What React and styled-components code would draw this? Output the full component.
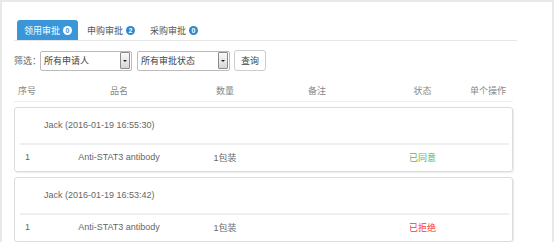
import React from 'react'
import styled, { createGlobalStyle } from 'styled-components'

const GlobalStyle = createGlobalStyle`
  html, body {
    margin: 0;
    padding: 0;
    background: #fff;
  }
  body {
    font-family: 'Liberation Sans', 'Noto Sans CJK SC', sans-serif;
    font-size: 9px;
    color: #666;
  }
`

const COLS = '26px 158px 54px 130px 81px 50px'
const CARD_COLS = '25px 158px 54px 130px 81px 50px'

const tabs = [
  { label: '领用审批', count: 0, active: true },
  { label: '申购审批', count: 2 },
  { label: '采购审批', count: 0 },
]

const records = [
  {
    who: 'Jack (2016-01-19 16:55:30)',
    no: 1,
    name: 'Anti-STAT3 antibody',
    qty: '1包装',
    note: '',
    status: '已同意',
    ok: true,
  },
  {
    who: 'Jack (2016-01-19 16:53:42)',
    no: 1,
    name: 'Anti-STAT3 antibody',
    qty: '1包装',
    note: '',
    status: '已拒绝',
    ok: false,
  },
]

const App = () => {
  return (
    <>
      <GlobalStyle />
      <Frame>
        <TabBar>
          {tabs.map((t) => (
            <Tab key={t.label} active={t.active}>
              {t.label}
              <Badge active={t.active}>{t.count}</Badge>
            </Tab>
          ))}
        </TabBar>

        <FilterRow>
          <FilterLabel>筛选：</FilterLabel>
          <Select width='92px'>
            <span>所有申请人</span>
            <Arrow />
          </Select>
          <Select width='93px'>
            <span>所有审批状态</span>
            <Arrow />
          </Select>
          <Button>查询</Button>
        </FilterRow>

        <HeadRow>
          <span>序号</span>
          <span>品名</span>
          <span>数量</span>
          <span>备注</span>
          <span>状态</span>
          <span>单个操作</span>
        </HeadRow>

        {records.map((r) => (
          <Card key={r.who}>
            <CardHeader>{r.who}</CardHeader>
            <Divider />
            <ItemRow>
              <span>{r.no}</span>
              <span>{r.name}</span>
              <span>{r.qty}</span>
              <span>{r.note}</span>
              <Status ok={r.ok}>{r.status}</Status>
              <span />
            </ItemRow>
          </Card>
        ))}
      </Frame>
    </>
  )
}

export default App

const Frame = styled.div`
  box-sizing: border-box;
  width: 554px;
  height: 242px;
  overflow: hidden;
  border: 2px solid #e8e8e8;
  border-bottom: none;
  padding: 18px 0 0 12px;
`

const TabBar = styled.div`
  display: flex;
  width: 500px;
  height: 20px;
  padding-left: 3px;
  box-sizing: content-box;
  border-bottom: 1px solid #e6e6e6;
`

const Tab = styled.div`
  display: flex;
  align-items: center;
  gap: 3px;
  height: 20px;
  padding: 0 6px 0 7px;
  margin-right: 2px;
  border-radius: 3px 3px 0 0;
  background: ${(props) => (props.active ? '#3a96d9' : 'transparent')};
  color: ${(props) => (props.active ? '#fff' : '#555')};
  font-size: 9px;
`

const Badge = styled.span`
  display: inline-flex;
  align-items: center;
  justify-content: center;
  width: 9px;
  height: 9px;
  border-radius: 50%;
  font-size: 7px;
  font-weight: bold;
  line-height: 1;
  background: ${(props) => (props.active ? '#fff' : '#2f88cc')};
  color: ${(props) => (props.active ? '#3a96d9' : '#fff')};
`

const FilterRow = styled.div`
  display: flex;
  align-items: center;
  margin-top: 9px;
  height: 21px;
`

const FilterLabel = styled.span`
  color: #666;
  margin-right: -1px;
`

const Select = styled.div`
  box-sizing: border-box;
  display: flex;
  align-items: center;
  justify-content: space-between;
  width: ${(props) => props.width};
  height: 20px;
  margin-right: 5px;
  padding: 0 1px 0 3px;
  border: 1px solid #bbb;
  border-radius: 2px;
  background: #fff;
  color: #444;
`

const Arrow = styled.span`
  box-sizing: border-box;
  display: flex;
  align-items: center;
  justify-content: center;
  width: 10px;
  height: 17px;
  border: 1px solid #8a8a8a;
  border-radius: 1px;
  background: linear-gradient(#fafafa, #d6d6d6);
  &::after {
    content: '';
    border-left: 2px solid transparent;
    border-right: 2px solid transparent;
    border-top: 2px solid #222;
  }
`

const Button = styled.div`
  box-sizing: border-box;
  display: flex;
  align-items: center;
  justify-content: center;
  width: 32px;
  height: 21px;
  margin-left: -1px;
  border: 1px solid #ccc;
  border-radius: 3px;
  color: #444;
  background: #fff;
`

const HeadRow = styled.div`
  display: grid;
  grid-template-columns: ${COLS};
  width: 499px;
  height: 22px;
  margin-top: 8px;
  align-items: center;
  text-align: center;
  color: #888;
  border-bottom: 1px solid #efefef;
`

const Card = styled.div`
  width: 499px;
  box-sizing: border-box;
  margin-top: 5px;
  border: 1px solid #dcdcdc;
  border-radius: 3px;
  box-shadow: 1px 1px 1px rgba(0, 0, 0, 0.08);
`

const CardHeader = styled.div`
  height: 35px;
  line-height: 35px;
  padding-left: 29px;
  color: #666;
`

const Divider = styled.div`
  height: 2px;
  margin: 0 3px 0 5px;
  background: #efefef;
`

const ItemRow = styled.div`
  display: grid;
  grid-template-columns: ${CARD_COLS};
  height: 26px;
  padding-bottom: 2px;
  box-sizing: border-box;
  align-items: center;
  text-align: center;
  color: #666;
`

const Status = styled.span`
  color: ${(props) => (props.ok ? '#5cba5c' : '#ff3333')};
`
